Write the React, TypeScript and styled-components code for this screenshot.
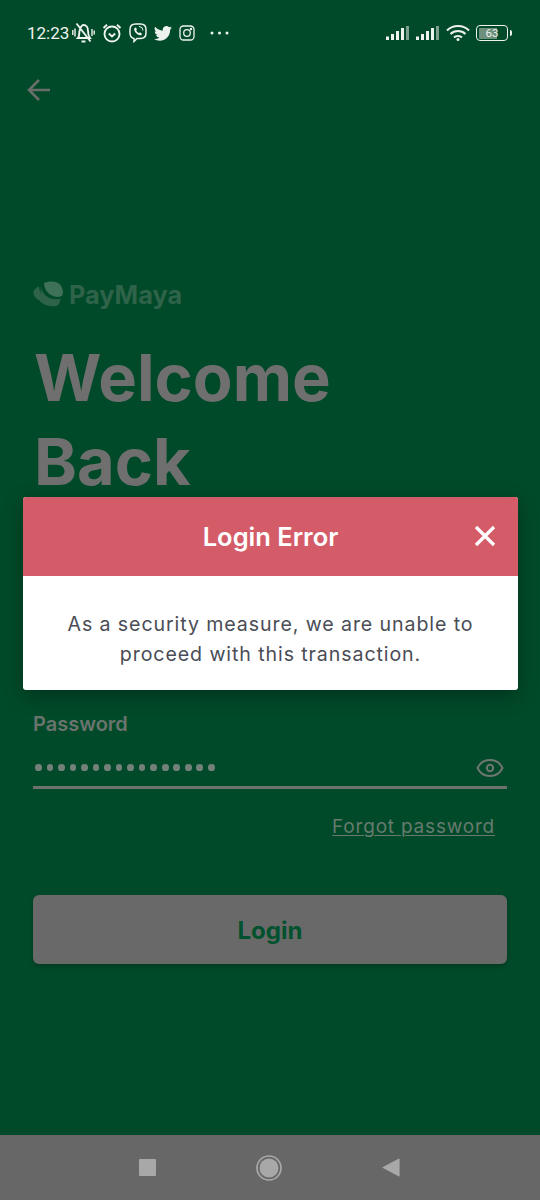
import React from "react";
import styled, { createGlobalStyle } from "styled-components";

const Global = createGlobalStyle`
  html, body { margin: 0; padding: 0; background: #004a29; }
  * { box-sizing: border-box; }
`;

const Screen = styled.div`
  position: relative;
  width: 540px;
  height: 1200px;
  overflow: hidden;
  background: #004a29;
  display: flex;
  flex-direction: column;
  font-family: Inter, "Liberation Sans", sans-serif;
`;

const StatusBar = styled.div`
  height: 66px;
  padding: 0 29px 0 27px;
  display: flex;
  align-items: center;
  justify-content: space-between;
  color: #eef3ef;
`;

const StatusGroup = styled.div<{ $gap: number }>`
  display: flex;
  align-items: center;
  gap: ${(p) => p.$gap}px;
`;

const Clock = styled.span`
  font-family: Roboto, sans-serif;
  font-size: 17px;
  color: #eef3ef;
  margin-right: -4px;
`;

const MoreSpacer = styled.span`
  width: 1px;
`;

const BackButton = styled.div`
  height: 48px;
  padding-left: 26px;
  display: flex;
  align-items: center;
`;

const Content = styled.main`
  flex: 1;
  padding: 164px 33px 0;
  display: flex;
  flex-direction: column;
`;

const Logo = styled.div`
  display: flex;
  align-items: center;
  gap: 5px;
  height: 32px;
  font-size: 25.3px;
  font-weight: 700;
  color: #2f6349;
`;

const Title = styled.h1`
  margin: 26px 0 0 1px;
  font-size: 65px;
  line-height: 84px;
  font-weight: 700;
  color: #6f6f6f;
`;

const FieldLabel = styled.label`
  margin-top: 208px;
  height: 24px;
  font-size: 20px;
  font-weight: 600;
  line-height: 24px;
  color: #6a746e;
`;

const PasswordRow = styled.div`
  margin-top: 8px;
  height: 45px;
  padding: 5px 3px 0 2px;
  display: flex;
  align-items: center;
  justify-content: space-between;
  border-bottom: 3px solid #6b736e;
`;

const Dots = styled.div`
  display: flex;
  gap: 4.85px;
`;

const Dot = styled.span`
  width: 6.7px;
  height: 6.7px;
  border-radius: 50%;
  background: #74807a;
`;

const ForgotLink = styled.a`
  align-self: flex-end;
  margin: 26px 12px 0 0;
  font-size: 19px;
  line-height: 24px;
  letter-spacing: 0.8px;
  color: #667b6f;
  text-decoration: underline;
  text-underline-offset: 2px;
  text-decoration-thickness: 1px;
`;

const LoginButton = styled.button`
  margin-top: 56px;
  height: 69px;
  padding: 2px 0 0;
  border: 0;
  border-radius: 6px;
  background: #696969;
  color: #00512d;
  font-family: inherit;
  font-size: 24px;
  font-weight: 700;
  box-shadow: 0 2px 4px rgba(0, 0, 0, 0.25);
`;

const NavBar = styled.nav`
  height: 65px;
  padding: 0 140px 0 139px;
  background: #676767;
  display: flex;
  align-items: center;
  justify-content: space-between;
`;

const Modal = styled.div`
  position: absolute;
  left: 23px;
  top: 497px;
  width: 495px;
  border-radius: 3px;
  overflow: hidden;
  background: #fff;
  box-shadow: 0 6px 20px rgba(0, 0, 0, 0.3);
`;

const ModalHeader = styled.div`
  position: relative;
  height: 79px;
  background: #d45c69;
  display: flex;
  align-items: center;
  justify-content: center;
  color: #fff;
  font-size: 25.5px;
  font-weight: 600;
  padding-bottom: 1px;
`;

const CloseIcon = styled.svg`
  position: absolute;
  right: 22px;
  top: 28px;
`;

const ModalBody = styled.p`
  margin: 0;
  height: 114px;
  padding: 33px 30px 0;
  text-align: center;
  font-size: 19.6px;
  line-height: 30px;
  letter-spacing: 0.9px;
  color: #4a4d55;
`;

const BackArrow = () => (
  <svg width="26" height="26" viewBox="0 0 26 26" fill="none" stroke="#6a6e6b" strokeWidth="2.6">
    <path d="M24 13H3M13 3 3 13l10 10" />
  </svg>
);

const MuteIcon = () => (
  <svg width="23" height="22" viewBox="0 0 23 22" fill="none" stroke="#eef3ef" strokeWidth="1.9">
    <path d="M6 16c1.500-1.500 1-4.500 1.500-7C8 5.500 10 3 11.500 3c3 0 4.500 3 4.500 6 0 2.500.5 5 2 7zM9.500 19.500h4M4.500 1.500l14 18" />
    <path d="M.8 8v5M3 6.500v8M20 7v7M22.200 8.500v4" strokeWidth="1.400" />
  </svg>
);

const AlarmIcon = () => (
  <svg width="20" height="20" viewBox="0 0 20 20" fill="none" stroke="#eef3ef" strokeWidth="1.900">
    <circle cx="10" cy="11" r="7.500" />
    <path d="M1.500 5 5 1.800M18.500 5 15 1.800M6.800 10.500 10 13.500l3.200-3" />
  </svg>
);

const ViberIcon = () => (
  <svg width="18" height="20" viewBox="0 0 18 20" fill="none" stroke="#eef3ef" strokeWidth="1.500">
    <path d="M5 15.500C2.500 15 1 13 1 10V6.500C1 3 3 1 6.500 1h5C15 1 17 3 17 6.500V10c0 3.500-2 5.500-5.500 5.500H8L5 18.500z" />
    <path d="M5.500 5c1-1 1.500-.5 2 .5s.5 1.200-.3 2c.6 1.300 1.400 2 2.600 2.600.8-.8 1.200-.8 2.200-.2s1.300 1.100.3 2c-1 .9-3 .3-4.800-1.300S4.500 6.200 5.500 5z" fill="#eef3ef" stroke="none" />
    <path d="M10 3.500a4 4 0 0 1 4 4" strokeWidth="1" />
  </svg>
);

const TwitterIcon = () => (
  <svg width="18" height="15" viewBox="0 0 24 20" fill="#eef3ef">
    <path d="M24 2.400a9.800 9.800 0 0 1-2.800.8A4.900 4.900 0 0 0 23.300.5a9.800 9.800 0 0 1-3.100 1.200 4.900 4.900 0 0 0-8.400 4.500A14 14 0 0 1 1.700.9a4.900 4.900 0 0 0 1.500 6.600 4.900 4.900 0 0 1-2.200-.6v.1a4.900 4.900 0 0 0 3.900 4.800 4.900 4.900 0 0 1-2.200.1 4.900 4.900 0 0 0 4.600 3.400A9.900 9.900 0 0 1 0 17.300 14 14 0 0 0 7.500 19.500c9.100 0 14-7.500 14-14v-.6A10 10 0 0 0 24 2.400z" />
  </svg>
);

const InstagramIcon = () => (
  <svg width="16" height="16" viewBox="0 0 16 16" fill="none" stroke="#eef3ef" strokeWidth="1.300">
    <rect x="1" y="1" width="14" height="14" rx="3.500" />
    <circle cx="8" cy="8" r="3.300" />
    <circle cx="12" cy="4" r=".6" fill="#eef3ef" />
  </svg>
);

const MoreIcon = () => (
  <svg width="19" height="4" viewBox="0 0 19 4" fill="#eef3ef">
    <circle cx="2" cy="2" r="1.500" />
    <circle cx="9.500" cy="2" r="1.500" />
    <circle cx="17" cy="2" r="1.500" />
  </svg>
);

const SignalIcon = () => (
  <svg width="24" height="16" viewBox="0 0 24 16">
    <rect x="0" y="11.500" width="3" height="3.500" fill="#eef3ef" />
    <rect x="5" y="9" width="3" height="6" fill="#eef3ef" />
    <rect x="10" y="6" width="3" height="9" fill="#eef3ef" />
    <rect x="15" y="3" width="3" height="12" fill="#eef3ef" />
    <rect x="20" y="1" width="3" height="14" fill="#7f9f8e" />
  </svg>
);

const WifiIcon = () => (
  <svg width="24" height="18" viewBox="0 0 24 18" fill="none" stroke="#eef3ef" strokeWidth="2">
    <path d="M1 6.500c6-6 16-6 22 0M4.500 10c4-4 11-4 15 0M8 13.500c2-2 6-2 8 0" />
    <circle cx="12" cy="15.500" r="1.500" fill="#eef3ef" stroke="none" />
  </svg>
);

const Battery = styled.div`
  position: relative;
  width: 32px;
  height: 16px;
  margin-right: 3px;
  border: 1.500px solid #eef3ef;
  border-radius: 4px;
  padding: 1.500px;
  display: flex;
`;

const BatteryFill = styled.div`
  flex: 1;
  background: linear-gradient(to right, #6d8f7c 66%, transparent 66%);
  border-radius: 1px;
  display: flex;
  align-items: center;
  justify-content: center;
  font-family: Roboto, sans-serif;
  font-size: 11.500px;
  color: #eef3ef;
`;

const BatteryTip = styled.span`
  position: absolute;
  right: -5px;
  top: 3.500px;
  width: 2.500px;
  height: 6px;
  border-radius: 0 2px 2px 0;
  background: #eef3ef;
`;

const LeafLogo = () => (
  <svg width="31" height="27" viewBox="0 0 31 27" fill="#2f6349">
    <path d="M11 2C16 -.5 24 0 27 3.500c3 3.500 3.800 8 2 11.500-2.500 1-5 1.300-7.500 .5C15 13.500 11 8 11 2z" fill="#3f7058" />
    <path d="M8 4.500C7.800 11 13 17 21 18c3 .4 5 .2 7-.5-1 .5-.8 7-5 7.500-6 1-12-1-16-4.500" />
    <path d="M6 5.500C3 6.500.5 9 .5 12c0 3 3 6.500 7 8 3 1 6 2 9 2-5-4-10-9-10.500-16.500z" />
  </svg>
);

const EyeIcon = () => (
  <svg width="28" height="20" viewBox="0 0 28 20" fill="none" stroke="#6e7672" strokeWidth="2">
    <path d="M1.500 10C4 4.800 8.500 2 14 2s10 2.800 12.500 8C24 15.200 19.500 18 14 18S4 15.200 1.500 10z" />
    <circle cx="14" cy="10" r="3.200" />
  </svg>
);

const CloseGlyph = () => (
  <CloseIcon width="22" height="22" viewBox="0 0 22 22" fill="none" stroke="#fff" strokeWidth="3.200">
    <path d="M2 2l18 18M20 2 2 20" />
  </CloseIcon>
);

const StopIcon = () => (
  <svg width="17" height="17" viewBox="0 0 17 17">
    <rect width="17" height="17" rx="1" fill="#a8a8a8" />
  </svg>
);

const HomeIcon = () => (
  <svg width="26" height="26" viewBox="0 0 26 26">
    <circle cx="13" cy="13" r="12" fill="none" stroke="#a8a8a8" strokeWidth="1.700" />
    <circle cx="13" cy="13" r="9.500" fill="#a8a8a8" />
  </svg>
);

const BackTriangle = () => (
  <svg width="18" height="19" viewBox="0 0 18 19">
    <path d="M0 9.500 17 0.500a.5.5 0 0 1 .6.5v17a.5.5 0 0 1-.6.500z" fill="#a8a8a8" />
  </svg>
);

export default function App() {
  return (
    <>
      <Global />
      <Screen>
        <StatusBar>
          <StatusGroup $gap={7}>
            <Clock>12:23</Clock>
            <MuteIcon />
            <AlarmIcon />
            <ViberIcon />
            <TwitterIcon />
            <InstagramIcon />
            <MoreSpacer />
            <MoreIcon />
          </StatusGroup>
          <StatusGroup $gap={6}>
            <SignalIcon />
            <SignalIcon />
            <WifiIcon />
            <Battery>
              <BatteryFill>63</BatteryFill>
              <BatteryTip />
            </Battery>
          </StatusGroup>
        </StatusBar>
        <BackButton>
          <BackArrow />
        </BackButton>
        <Content>
          <Logo>
            <LeafLogo />
            PayMaya
          </Logo>
          <Title>
            Welcome
            <br />
            Back
          </Title>
          <FieldLabel>Password</FieldLabel>
          <PasswordRow>
            <Dots>
              {Array.from({ length: 16 }, (_, i) => (
                <Dot key={i} />
              ))}
            </Dots>
            <EyeIcon />
          </PasswordRow>
          <ForgotLink>Forgot password</ForgotLink>
          <LoginButton>Login</LoginButton>
        </Content>
        <NavBar>
          <StopIcon />
          <HomeIcon />
          <BackTriangle />
        </NavBar>
        <Modal>
          <ModalHeader>
            Login Error
            <CloseGlyph />
          </ModalHeader>
          <ModalBody>
            As a security measure, we are unable to proceed with this transaction.
          </ModalBody>
        </Modal>
      </Screen>
    </>
  );
}
